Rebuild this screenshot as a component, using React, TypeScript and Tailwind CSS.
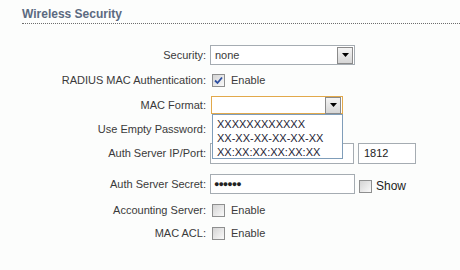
function Arrow() {
  return (
    <span className="flex h-[17px] w-[16px] items-center justify-center border border-[#8a8a8a] bg-gradient-to-b from-[#f4f4f4] to-[#d6d6d6]">
      <svg width="7" height="4" viewBox="0 0 7 4">
        <path d="M0 0h7L3.5 4z" fill="#000" />
      </svg>
    </span>
  );
}

function Box({ checked = false }: { checked?: boolean }) {
  return (
    <span className="relative flex h-[13px] w-[13px] items-center justify-center border border-[#8e8f8f] bg-gradient-to-br from-[#d4d4d4] to-[#fafafa]">
      {checked && (
        <svg width="9" height="9" viewBox="0 0 9 9">
          <path d="M1 4.5l2.5 2.5L8 1.5" stroke="#2c4ea0" strokeWidth="1.8" fill="none" />
        </svg>
      )}
    </span>
  );
}

function Row({
  label,
  className,
  children,
}: {
  label: string;
  className: string;
  children?: React.ReactNode;
}) {
  return (
    <div className={`flex items-center ${className}`}>
      <div className="w-[207px] pr-[1px] text-right">{label}</div>
      <div className="ml-[3px] flex items-center">{children}</div>
    </div>
  );
}

export default function App() {
  return (
    <div className="h-[270px] w-[460px] overflow-hidden bg-[#fcfdfc] font-['Liberation_Sans',Arial,sans-serif] text-[11px] leading-[13px] text-[#3a3a3a]">
      <div className="pl-[22px] pt-[7px]">
        <h2 className="border-b border-dotted border-[#6d6d6d] pb-[2px] text-[12px] font-bold leading-[14px] text-[#5b6a80]">
          Wireless Security
        </h2>
      </div>

      <Row label="Security:" className="mt-[21px] h-[20px]">
        <div className="flex h-[20px] w-[145px] items-center justify-between border border-[#a5acb2] bg-white pl-[4px] pr-[1px]">
          <span>none</span>
          <Arrow />
        </div>
      </Row>

      <Row label="RADIUS MAC Authentication:" className="mt-[6px] h-[19px]">
        <span className="ml-[2px]">
          <Box checked />
        </span>
        <span className="ml-[6px]">Enable</span>
      </Row>

      <Row label="MAC Format:" className="relative z-10 mt-[6px] h-[18px]">
        <div className="relative ml-[1px]">
          <div className="flex h-[18px] w-[132px] items-center justify-end border border-[#e2a94b] bg-white pr-[1px]">
            <Arrow />
          </div>
          <div className="absolute left-[1px] top-[18px] h-[45px] w-[131px] border border-[#7f9db9] bg-white pl-[4px] pt-[2px] leading-[14px] text-[#1c2233]">
            <div>XXXXXXXXXXXX</div>
            <div>XX-XX-XX-XX-XX-XX</div>
            <div>XX:XX:XX:XX:XX:XX</div>
          </div>
        </div>
      </Row>

      <Row label="Use Empty Password:" className="mt-[6px] h-[18px]">
        <span className="ml-[6px]">
          <Box />
        </span>
      </Row>

      <Row label="Auth Server IP/Port:" className="mt-[5px] h-[21px]">
        <div className="h-[21px] w-[144px] border border-[#a5acb2] bg-white" />
        <div className="ml-[4px] flex h-[21px] w-[58px] items-center border border-[#a5acb2] bg-white pl-[5px] text-[#222]">
          1812
        </div>
      </Row>

      <Row label="Auth Server Secret:" className="mt-[10px] h-[20px]">
        <div className="flex h-[20px] w-[145px] items-center border border-[#a5acb2] bg-white pl-[3px] text-[9px] tracking-[-1px] text-[#222]">
          ●●●●●●
        </div>
        <span className="ml-[4px] mt-[5px]">
          <Box />
        </span>
        <span className="ml-[4px] mt-[4px] text-[12px] text-[#222]">Show</span>
      </Row>

      <Row label="Accounting Server:" className="mt-[7px] h-[18px]">
        <span className="ml-[2px]">
          <Box />
        </span>
        <span className="ml-[6px]">Enable</span>
      </Row>

      <Row label="MAC ACL:" className="mt-[5px] h-[18px]">
        <span className="ml-[2px]">
          <Box />
        </span>
        <span className="ml-[6px]">Enable</span>
      </Row>
    </div>
  );
}
